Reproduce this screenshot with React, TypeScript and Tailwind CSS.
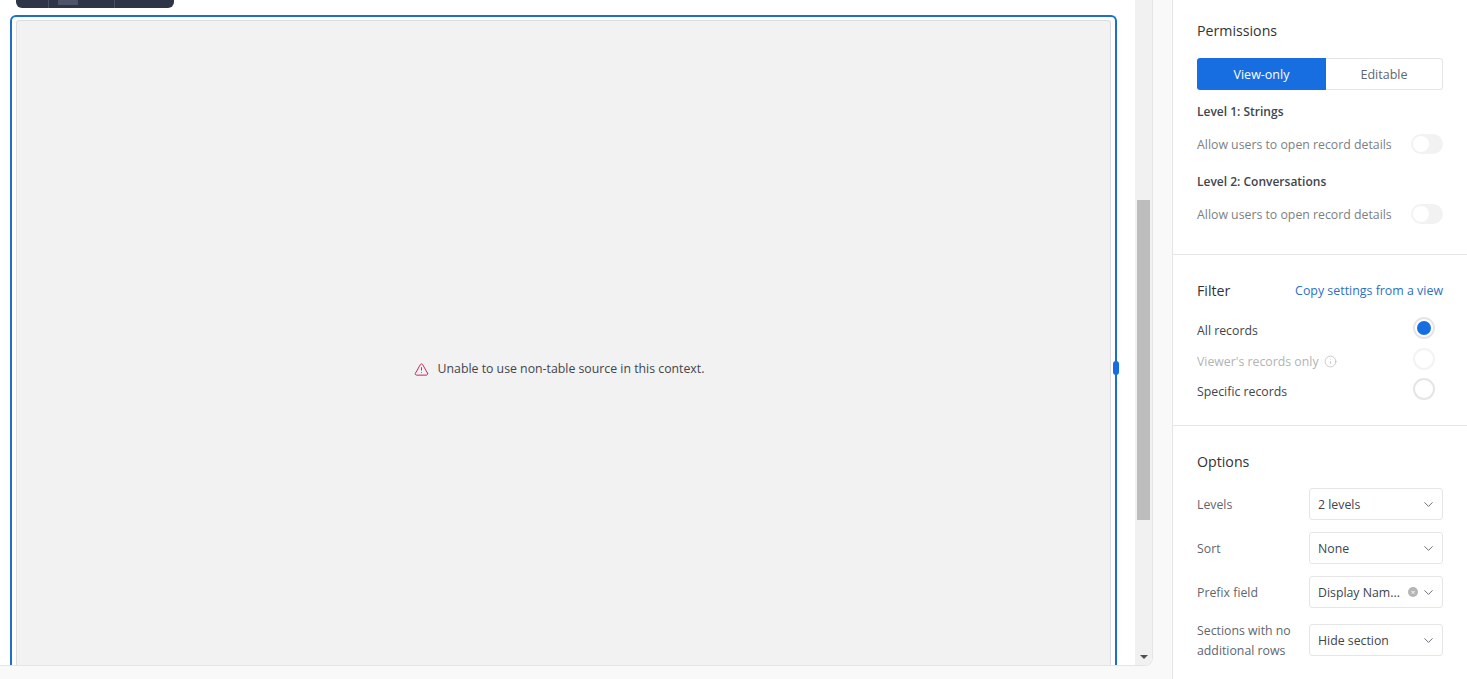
import { ChevronDown, Info, TriangleAlert } from 'lucide-react';

const font = "font-['Open_Sans','Liberation_Sans',sans-serif]";

const Toggle = () => (
  <span className="flex h-5 w-8 items-center rounded-full bg-[#f2f2f2] px-0.5">
    <span className="h-4 w-4 rounded-full bg-white" />
  </span>
);

const Radio = ({ checked, faded }: { checked?: boolean; faded?: boolean }) => (
  <span
    className={`flex h-[22px] w-[22px] items-center justify-center rounded-full border-2 bg-white ${
      faded ? 'border-[#f3f3f3]' : 'border-[#e5e5e5]'
    }`}
  >
    {checked && <span className="h-[14px] w-[14px] rounded-full bg-[#166ee1]" />}
  </span>
);

const SelectRow = ({
  label,
  value,
  clear,
  className,
}: {
  label: string;
  value: string;
  clear?: boolean;
  className?: string;
}) => (
  <div className={`flex items-center justify-between ${className ?? ''}`}>
    <span className="w-[104px] pt-[2px] text-[12.3px] leading-5 text-[#616670]">{label}</span>
    <div className="flex h-8 w-[134px] items-center rounded-[3px] border border-[#e5e5e5] bg-white pl-2 pr-[6px]">
      <span className="flex-1 truncate pt-[2px] text-[12.3px] text-[#41454d]">{value}</span>
      {clear && (
        <span className="mr-[3px] flex h-[10px] w-[10px] items-center justify-center rounded-full bg-[#b5b5b5] text-[8px] leading-none text-white">
          ×
        </span>
      )}
      <ChevronDown size={15} strokeWidth={1.5} className="text-[#616670]" />
    </div>
  </div>
);

export default function App() {
  return (
    <div className={`flex h-[679px] w-[1467px] overflow-hidden bg-[#f9f9f9] ${font}`}>
      <div className="flex-1 pr-[19px]">
        <div className="flex h-[666px] overflow-hidden rounded-br-lg border-b border-r border-[#e5e5e5] bg-white">
          <div className="flex flex-1 flex-col overflow-hidden pl-[10px] pr-[18px]">
            <div className="ml-[6px] flex h-2 w-[158px] shrink-0 rounded-b-md bg-[#2f3548]">
              <span className="ml-[32px] h-full w-px bg-[#4a5064]" />
              <span className="ml-[9px] h-[5px] w-5 bg-[#4d5368]" />
              <span className="ml-[36px] h-full w-px bg-[#4a5064]" />
            </div>
            <div className="relative mt-[7px] h-[704px] shrink-0 rounded-t-md border-2 border-b-0 border-[#1d6fc9] px-1 pt-[3px]">
              <div className="flex h-full items-center justify-center gap-[9px] rounded-t-[3px] border border-b-0 border-[#dcdcdc] bg-[#f2f2f2] pb-[2px] pr-[9px]">
                <TriangleAlert size={15} strokeWidth={1.5} className="text-[#c4175f]" />
                <span className="text-[12.3px] text-[#41454d]">Unable to use non-table source in this context.</span>
              </div>
              <span className="absolute right-[-4px] top-1/2 h-[14px] w-[6px] -translate-y-1/2 rounded-[3px] bg-[#166ee1]" />
            </div>
          </div>
          <div className="flex w-[17px] flex-col items-center bg-[#f1f1f1]">
            <div className="mt-[200px] h-[320px] w-[13px] bg-[#bdbdbd]" />
            <div className="mt-auto mb-[6px] h-0 w-0 border-x-4 border-t-4 border-x-transparent border-t-[#505050]" />
          </div>
        </div>
      </div>
      <aside className="w-[295px] shrink-0 border-l border-[#e5e5e5] bg-white">
        <section className="h-[255px] border-b border-[#e5e5e5] px-6 pt-[21px]">
          <h2 className="text-[14.2px] leading-5 text-[#333]">Permissions</h2>
          <div className="mt-[17px] flex h-8 text-[12.5px]">
            <span className="flex w-[129px] items-center justify-center rounded-l-[3px] bg-[#166ee1] pt-[2px] font-medium text-white">
              View-only
            </span>
            <span className="flex flex-1 items-center justify-center rounded-r-[3px] border border-l-0 border-[#e5e5e5] pt-[2px] text-[#616670]">
              Editable
            </span>
          </div>
          <div className="mt-[12px] text-[12px] font-semibold leading-5 text-[#41454d]">Level 1: Strings</div>
          <div className="mt-[11px] flex items-center justify-between text-[12.3px] leading-5 text-[#7c7f86]">
            <span className="pt-[2px]">Allow users to open record details</span>
            <Toggle />
          </div>
          <div className="mt-[17px] text-[12px] font-semibold leading-5 text-[#41454d]">Level 2: Conversations</div>
          <div className="mt-[11px] flex items-center justify-between text-[12.3px] leading-5 text-[#7c7f86]">
            <span className="pt-[2px]">Allow users to open record details</span>
            <Toggle />
          </div>
        </section>
        <section className="h-[171px] border-b border-[#e5e5e5] px-6 pt-[26px]">
          <div className="flex items-center justify-between">
            <h2 className="text-[14.2px] leading-5 text-[#333]">Filter</h2>
            <a className="text-[12.4px] text-[#2d6fc4]">Copy settings from a view</a>
          </div>
          <div className="mt-[16px] flex h-[22px] items-center justify-between pr-2 text-[12.3px] text-[#41454d]">
            <span className="mt-[6px]">All records</span>
            <Radio checked />
          </div>
          <div className="mt-[9px] flex h-[22px] items-center justify-between pr-2 text-[12.3px] text-[#b3b3b3]">
            <span className="mt-[6px] flex items-center gap-[5px]">
              Viewer's records only <Info size={13} strokeWidth={1.25} className="-mt-0.5" />
            </span>
            <Radio faded />
          </div>
          <div className="mt-2 flex h-[22px] items-center justify-between pr-2 text-[12.3px] text-[#41454d]">
            <span className="mt-[6px]">Specific records</span>
            <Radio />
          </div>
        </section>
        <section className="px-6 pt-[26px]">
          <h2 className="text-[14.2px] leading-5 text-[#333]">Options</h2>
          <SelectRow className="mt-[16px]" label="Levels" value="2 levels" />
          <SelectRow className="mt-3" label="Sort" value="None" />
          <SelectRow className="mt-3" label="Prefix field" value="Display Nam..." clear />
          <SelectRow className="mt-[11px]" label="Sections with no additional rows" value="Hide section" />
        </section>
      </aside>
    </div>
  );
}
